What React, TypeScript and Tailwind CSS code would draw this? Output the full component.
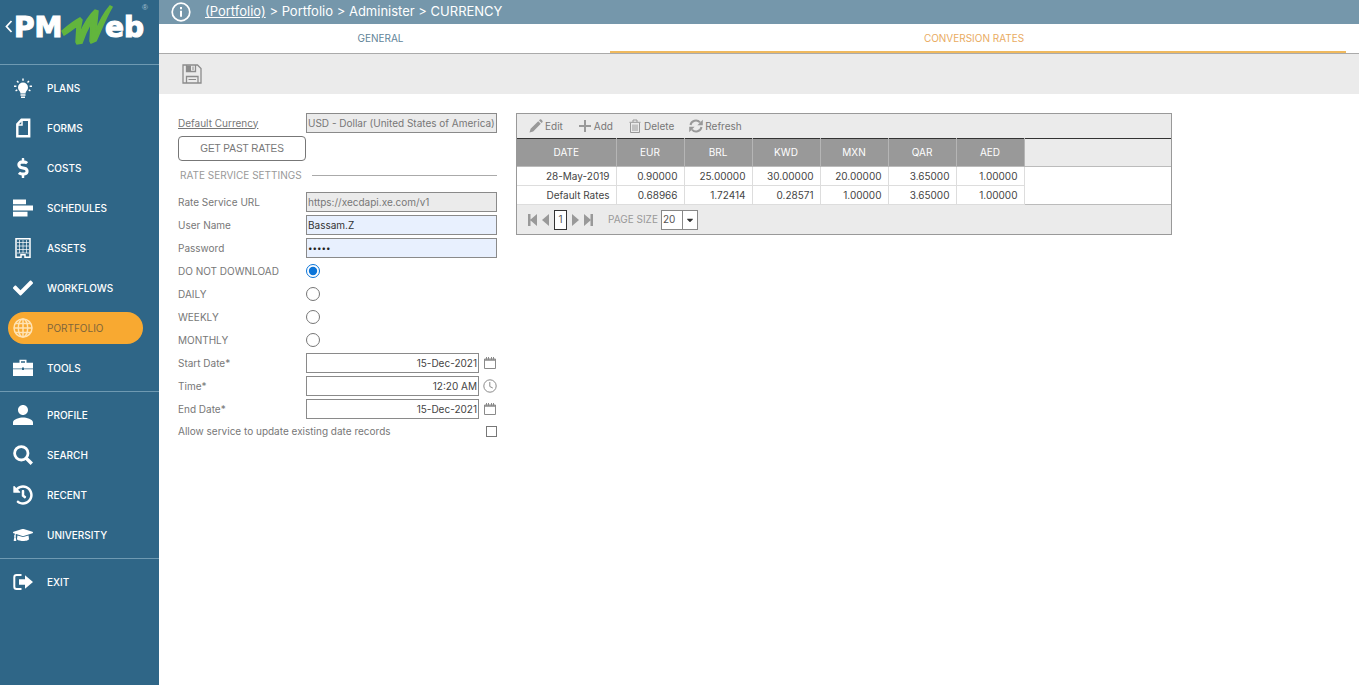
import { useState } from 'react'
import type { ReactNode } from 'react'
import { FaCaretDown, FaCheck, FaDollarSign, FaGraduationCap, FaHistory } from 'react-icons/fa'
import { MdPerson } from 'react-icons/md'

type NavItem = { name: string; icon: ReactNode; current?: boolean }

const BulbIcon = () => (
  <svg viewBox="0 0 20 20" className="size-5" fill="currentColor">
    <path d="M10 4.500a5 5 0 0 0-5 5c0 2 1.200 3 2 4.300.3.500.4 1.200.4 1.700h5.200c0-.5.1-1.200.4-1.700.8-1.300 2-2.300 2-4.300a5 5 0 0 0-5-5zM7.500 16.300h5v1.400h-5zM8 18.500h4V20H8z" />
    <path d="M10 .5v2.200M4 3l1.500 1.500M16 3l-1.500 1.500M1 8.300h2.400M16.600 8.300H19M2.600 12.800l1.700-1M17.400 12.800l-1.700-1" stroke="currentColor" strokeWidth="1.500" />
  </svg>
)

const FormIcon = () => (
  <svg viewBox="0 0 20 20" className="size-5" fill="none" stroke="currentColor">
    <path d="M8.500 1.800h7.700v16.400H4.300V6.200z" strokeWidth="2.400" />
    <path d="M9 2v5H4" strokeWidth="1.500" />
  </svg>
)

const ScheduleIcon = () => (
  <svg viewBox="0 0 20 20" className="size-5" fill="currentColor">
    <path d="M0 1.500h13v4.800H0zM0 7.500h20v5H0zM0 13.700h14.500v4.800H0z" />
  </svg>
)

const BuildingIcon = () => (
  <svg viewBox="0 0 20 20" className="size-5" fill="none" stroke="currentColor">
    <path d="M3 .8h14v18.400h-5v-2.500H8v2.500H3z" strokeWidth="1.500" />
    <path d="M6.500 2v13M10 2v13M13.500 2v13M4 4.500h12M4 8h12M4 11.500h12M4 15h12" strokeWidth=".7" />
  </svg>
)

const GlobeIcon = () => (
  <svg viewBox="0 0 20 20" className="size-5" fill="none" stroke="currentColor" strokeWidth="1.500">
    <circle cx="10" cy="10" r="9" />
    <ellipse cx="10" cy="10" rx="4.700" ry="9" />
    <path d="M10 1v18M1 10h18M2.500 5.500h15M2.500 14.500h15" />
  </svg>
)

const ToolboxIcon = () => (
  <svg viewBox="0 0 20 20" className="size-5" fill="currentColor">
    <path d="M6.500 5V1.800h7V5H12V3.300H8V5zM0 4.800h20v5.700h-9V9.500H9v1H0zM0 11.200h9v.8h2v-.8h9V18H0z" />
  </svg>
)

const SearchIcon = () => (
  <svg viewBox="0 0 20 20" className="size-5" fill="none" stroke="currentColor">
    <circle cx="8.300" cy="8.300" r="6.700" strokeWidth="2.800" />
    <path d="m13 13 5.800 5.800" strokeWidth="3.400" />
  </svg>
)

const ExitIcon = () => (
  <svg viewBox="0 0 20 20" className="size-5">
    <path d="M8.500 3H3.600A2.300 2.300 0 0 0 1.300 5.300v9.400A2.300 2.300 0 0 0 3.600 17h4.900" fill="none" stroke="currentColor" strokeWidth="2" />
    <path d="M6 7.200h6V3.300l8 6.700-8 6.700v-3.900H6z" fill="currentColor" />
  </svg>
)

const InfoIcon = () => (
  <svg viewBox="0 0 20 20" className="size-5" fill="none" stroke="currentColor">
    <circle cx="10" cy="10" r="8.800" strokeWidth="1.700" />
    <path d="M10 8.800v6M10 5v2.200" strokeWidth="2" />
  </svg>
)

const SaveIcon = () => (
  <svg viewBox="0 0 20 20" className="size-5" fill="none" stroke="currentColor" strokeWidth="1.300">
    <path d="M1 1h14.500L19 4.500V19H1zM4.500 1v6.500h9V1M4.500 19v-6.500h11.500V19" />
    <path d="M5 1.500h4V7H5z" fill="currentColor" stroke="none" />
    <path d="M11 2.500v3.500M6.500 15.500h7.500" strokeWidth="1" />
  </svg>
)

const CalendarIcon = () => (
  <svg viewBox="0 0 14 14" className="size-[14px]" fill="none" stroke="currentColor">
    <path d="M1.500 3h11v9.500h-11z" />
    <path d="M2 4h10" strokeWidth="1.500" />
    <path d="M3.500 1v3M5.500 1v3M8.500 1v3M10.500 1v3" />
  </svg>
)

const ClockIcon = () => (
  <svg viewBox="0 0 14 14" className="size-[14px]" fill="none" stroke="currentColor">
    <circle cx="7" cy="7" r="6.200" />
    <path d="M6.800 3v4.500l3 1.500" />
  </svg>
)

const PencilIcon = () => (
  <svg viewBox="0 0 14 14" className="size-[14px]" fill="currentColor">
    <path d="M.5 13.500 1.600 9.800 9.200 2.200l2.600 2.600-7.600 7.600zM10 1.400l.8-.8c.6-.6 1.300-.3 1.800.2l.6.6c.5.5.8 1.200.2 1.800l-.8.800z" />
  </svg>
)

const PlusIcon = () => (
  <svg viewBox="0 0 14 14" className="size-[14px]" stroke="currentColor" strokeWidth="2">
    <path d="M7 1v12M1 7h12" />
  </svg>
)

const TrashIcon = () => (
  <svg viewBox="0 0 14 14" className="size-[14px]" fill="none" stroke="currentColor">
    <path d="M2.500 4v9.500h9V4M1.500 3.300h11M5 3V1h4v2M5 5.500V12M7 5.500V12M9 5.500V12" />
  </svg>
)

const RefreshIcon = () => (
  <svg viewBox="0 0 14 14" className="size-[14px]">
    <path d="M1.500 6A5.500 5.500 0 0 1 11 3.300M12.500 8A5.500 5.500 0 0 1 3 10.700" fill="none" stroke="currentColor" strokeWidth="2" />
    <path d="M13.800.8v5.400H8.400zM.2 13.200V7.800h5.400z" fill="currentColor" />
  </svg>
)

const groups: NavItem[][] = [
  [
    { name: 'PLANS', icon: <BulbIcon /> },
    { name: 'FORMS', icon: <FormIcon /> },
    { name: 'COSTS', icon: <FaDollarSign className="size-5" /> },
    { name: 'SCHEDULES', icon: <ScheduleIcon /> },
    { name: 'ASSETS', icon: <BuildingIcon /> },
    { name: 'WORKFLOWS', icon: <FaCheck className="size-5" /> },
    { name: 'PORTFOLIO', icon: <GlobeIcon />, current: true },
    { name: 'TOOLS', icon: <ToolboxIcon /> },
  ],
  [
    { name: 'PROFILE', icon: <MdPerson className="size-5 scale-150" /> },
    { name: 'SEARCH', icon: <SearchIcon /> },
    { name: 'RECENT', icon: <FaHistory className="size-5" /> },
    { name: 'UNIVERSITY', icon: <FaGraduationCap className="size-5" /> },
  ],
  [{ name: 'EXIT', icon: <ExitIcon /> }],
]

const Logo = () => (
  <svg viewBox="0 0 159 64" className="h-16 w-full" role="img" aria-label="PMWeb">
    <path d="M11.500 21 6.500 26.500l5 5.500" fill="none" stroke="#fff" strokeWidth="1.800" />
    <g
      className="font-['DejaVu_Sans',sans-serif] text-[28px] font-bold"
      fill="#fff"
      stroke="#fff"
      strokeWidth="1.200"
    >
      <text x="14" y="37">PM</text>
      <text x="105" y="37">eb</text>
    </g>
    {/* brush mark */}
    <path
      d="M62 31C68 26 74 21 80 18l2 2-3 15C84 24 89 15 95 10l3 1-2 20c4-11 8-18 14-25l2 1c-6 10-11 23-16 34l-5 2-1-2 1-18c-4 7-7 14-9 20l-5 1-1-2 1-16c-4 3-9 7-13 9z"
      fill="#62b53d"
      stroke="#62b53d"
      strokeWidth="1.500"
    />
    <text x="142" y="10" fill="#a9c3d1" className="font-['Liberation_Sans',sans-serif] text-[8px]">
      ®
    </text>
  </svg>
)

const Sidebar = () => (
  <aside className="w-[159px] shrink-0 bg-[#2f6687] text-white">
    <Logo />
    <nav>
      {groups.map((items) => (
        <div key={items[0].name} className="border-t border-[#6f9ab2] py-[3px]">
          {items.map((item) => (
            <div key={item.name} className="flex h-10 items-center pr-4 pl-2">
              <a
                href="#"
                className={`flex h-8 w-full items-center gap-[14px] rounded-full pl-[5px] text-[10px] ${
                  item.current ? 'bg-[#f8a931]' : 'font-medium'
                }`}
              >
                <span className={item.current ? 'text-[#ffe3b4]' : 'text-white'}>{item.icon}</span>
                <span className={item.current ? 'text-[#80663b]' : 'text-white'}>{item.name}</span>
              </a>
            </div>
          ))}
        </div>
      ))}
    </nav>
  </aside>
)

const fieldClass = 'h-5 w-full min-w-0 border border-[#8a8a8a] px-px outline-none'

function Row({ label, id, children }: { label: string; id: string; children: ReactNode }) {
  return (
    <div className="flex h-[23px] items-center">
      <label htmlFor={id} className="w-32 shrink-0 pt-0.5">
        {label}
      </label>
      {children}
    </div>
  )
}

function PickerRow({ label, id, value, icon }: { label: string; id: string; value: string; icon: ReactNode }) {
  return (
    <Row label={label} id={id}>
      <input id={id} defaultValue={value} className={`${fieldClass} text-right text-[#444]`} />
      <button type="button" aria-label={`Pick ${label}`} className="ml-1 shrink-0 text-[#8a8a8a]">
        {icon}
      </button>
    </Row>
  )
}

const schedules = ['DO NOT DOWNLOAD', 'DAILY', 'WEEKLY', 'MONTHLY']

function RateServiceForm() {
  const [schedule, setSchedule] = useState(schedules[0])

  return (
    <form className="w-[319px] shrink-0 text-[10px] text-[#777]">
      <div className="flex h-5 items-center">
        <label htmlFor="currency" className="w-32 shrink-0 underline">
          Default Currency
        </label>
        <input
          id="currency"
          readOnly
          value="USD - Dollar (United States of America)"
          className={`${fieldClass} bg-[#ebebeb]`}
        />
      </div>
      <button
        type="button"
        className="mt-[3px] h-[25px] w-32 rounded border border-[#777] font-['Liberation_Sans',sans-serif]"
      >
        GET PAST RATES
      </button>
      <div className="mt-1 mb-[5px] flex h-5 items-center gap-[10px] pl-0.5 text-[#999]">
        <h2>RATE SERVICE SETTINGS</h2>
        <div className="h-px grow bg-[#aaa]" />
      </div>
      <Row label="Rate Service URL" id="url">
        <input id="url" readOnly value="https://xecdapi.xe.com/v1" className={`${fieldClass} bg-[#ebebeb]`} />
      </Row>
      <Row label="User Name" id="user">
        <input id="user" defaultValue="Bassam.Z" className={`${fieldClass} bg-[#e8f0fe] text-[#333]`} />
      </Row>
      <Row label="Password" id="password">
        <input
          id="password"
          type="password"
          defaultValue="12345"
          className={`${fieldClass} bg-[#e8f0fe] text-[8px] text-[#222]`}
        />
      </Row>
      {schedules.map((name) => (
        <Row key={name} label={name} id={name}>
          <input
            id={name}
            type="radio"
            name="schedule"
            checked={schedule === name}
            onChange={() => setSchedule(name)}
            className="size-[14px] accent-[#0b74d8]"
          />
        </Row>
      ))}
      <PickerRow label="Start Date*" id="start" value="15-Dec-2021" icon={<CalendarIcon />} />
      <PickerRow label="Time*" id="time" value="12:20 AM" icon={<ClockIcon />} />
      <PickerRow label="End Date*" id="end" value="15-Dec-2021" icon={<CalendarIcon />} />
      <div className="flex h-[22px] items-center justify-between">
        <label htmlFor="allow">Allow service to update existing date records</label>
        <input id="allow" type="checkbox" className="size-[11px] appearance-none border border-[#777]" />
      </div>
    </form>
  )
}

const columns = ['DATE', 'EUR', 'BRL', 'KWD', 'MXN', 'QAR', 'AED']

const rates = [
  ['28-May-2019', '0.90000', '25.00000', '30.00000', '20.00000', '3.65000', '1.00000'],
  ['Default Rates', '0.68966', '1.72414', '0.28571', '1.00000', '3.65000', '1.00000'],
]

const actions = [
  { name: 'Edit', icon: <PencilIcon /> },
  { name: 'Add', icon: <PlusIcon /> },
  { name: 'Delete', icon: <TrashIcon /> },
  { name: 'Refresh', icon: <RefreshIcon /> },
]

const pagerIcons = {
  'First page': 'M0 0h2.500v12H0zM9 0v12L2 6z',
  'Previous page': 'M8 0v12L1 6z',
  'Next page': 'M2 0v12l7-6z',
  'Last page': 'M1 0v12l7-6zM7.500 0H10v12H7.500z',
}

function PagerButton({ name }: { name: keyof typeof pagerIcons }) {
  return (
    <button type="button" aria-label={name}>
      <svg viewBox="0 0 10 12" className="h-3 w-[10px]" fill="#999">
        <path d={pagerIcons[name]} />
      </svg>
    </button>
  )
}

const RatesGrid = () => (
  <section className="max-w-[656px] grow border border-[#999] bg-[#ebebeb] text-[10px]">
    <div className="flex h-6 items-center gap-[15px] pl-3 text-[#777]">
      {actions.map((action) => (
        <button key={action.name} type="button" className="flex items-center gap-[2px]">
          <span className="text-[#999]">{action.icon}</span>
          {action.name}
        </button>
      ))}
    </div>
    <table className="w-full table-fixed border-t border-[#333]">
      <thead>
        <tr className="h-7 border-b border-[#bbb] text-white">
          {columns.map((column, i) => (
            <th
              key={column}
              className={`border-r border-[#b5b5b5] bg-[#999] font-normal ${i === 0 ? 'w-[99px]' : 'w-[68px]'}`}
            >
              {column}
            </th>
          ))}
          <td />
        </tr>
      </thead>
      <tbody className="border-b border-[#bbb] bg-white text-right text-[#444]">
        {rates.map((row) => (
          <tr key={row[0]} className="h-[19px]">
            {row.map((value, i) => (
              <td key={i} className="border-r border-b border-[#ddd] pr-[6px]">
                {value}
              </td>
            ))}
            <td />
          </tr>
        ))}
      </tbody>
    </table>
    <div className="flex h-[29px] items-center gap-[3px] pl-[11px] text-[#999]">
      <PagerButton name="First page" />
      <PagerButton name="Previous page" />
      <button type="button" className="h-5 w-[13px] border border-[#333] bg-white text-[#555]">
        1
      </button>
      <PagerButton name="Next page" />
      <PagerButton name="Last page" />
      <label htmlFor="page-size" className="ml-3">
        PAGE SIZE
      </label>
      <div className="relative h-5 w-[37px]">
        <select
          id="page-size"
          defaultValue="20"
          className="h-full w-full appearance-none border border-[#888] bg-white pl-px text-[#555]"
        >
          <option>20</option>
          <option>50</option>
        </select>
        <span className="pointer-events-none absolute inset-y-0 right-0 flex w-4 items-center justify-center border border-[#888] text-[#333]">
          <FaCaretDown />
        </span>
      </div>
    </div>
  </section>
)

export default function App() {
  return (
    <div className="flex min-h-screen bg-white font-['Inter',sans-serif]">
      <Sidebar />
      <div className="min-w-0 grow">
        <header className="flex h-6 items-center gap-[14px] bg-[#7597ab] pl-3 text-[13px] text-white">
          <InfoIcon />
          <p>
            <a href="#" className="underline">
              (Portfolio)
            </a>{' '}
            &gt; Portfolio &gt; Administer &gt; CURRENCY
          </p>
        </header>
        <div className="flex h-[30px] border-b border-[#aaa] pr-[13px] text-[10px]">
          <button type="button" className="w-[38%] pr-2 text-[#5f8499]">
            GENERAL
          </button>
          <button type="button" className="grow border-b-2 border-[#efb95e] pt-0.5 pr-2 text-[#e9ab5f]">
            CONVERSION RATES
          </button>
        </div>
        <div className="flex h-10 items-center bg-[#ebebeb] pl-[23px] text-[#8c8c8c]">
          <button type="button" aria-label="Save">
            <SaveIcon />
          </button>
        </div>
        <main className="flex items-start gap-[19px] px-[19px] py-[19px]">
          <RateServiceForm />
          <RatesGrid />
        </main>
      </div>
    </div>
  )
}
